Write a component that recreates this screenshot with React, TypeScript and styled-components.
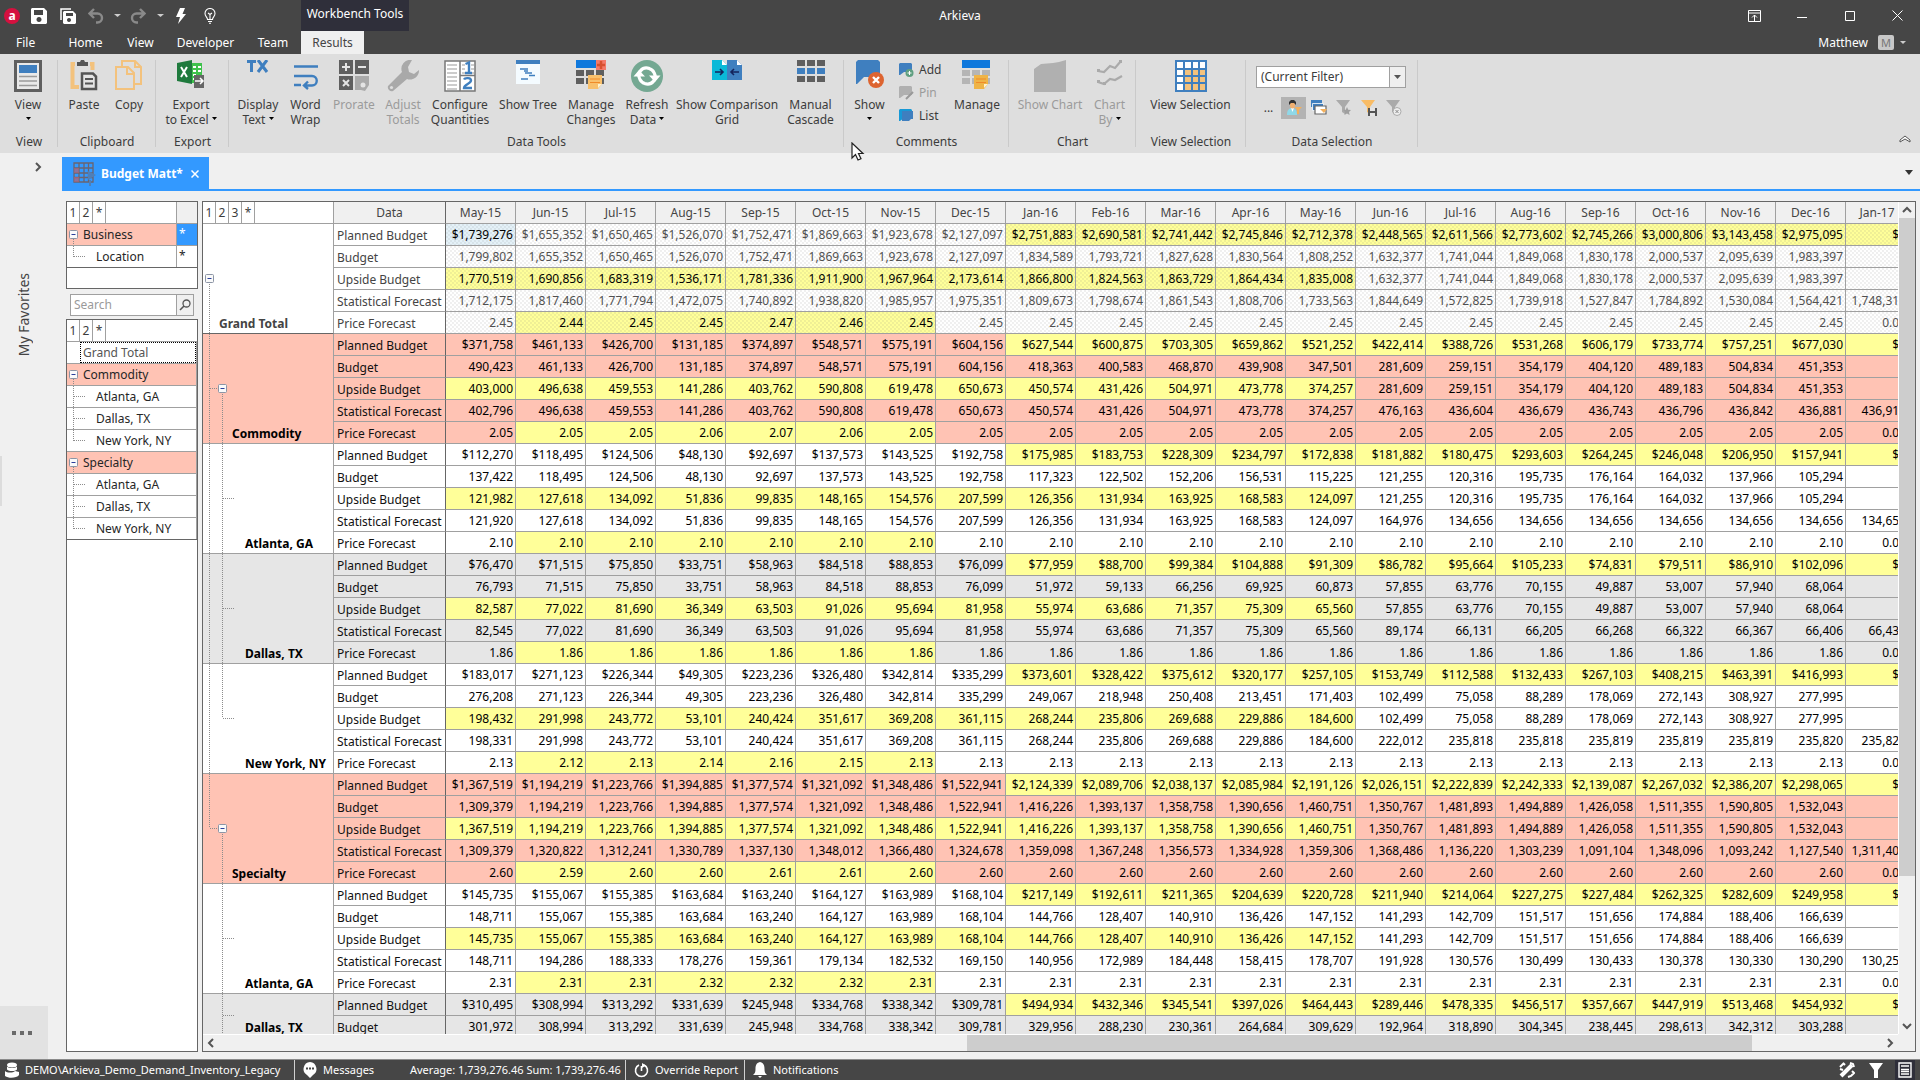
import React from 'react';
import styled, { createGlobalStyle, css } from 'styled-components';

const FONT = '"Noto Sans", "Open Sans", sans-serif';
const LINE = '#a0a0a0';
const FRAME = '#666666';
const PINK = '#ffc3b4';
const YELLOW = '#ffff99';
const BLUE = '#3399ff';

const GlobalStyle = createGlobalStyle`
  * { box-sizing: border-box; }
  body { margin: 0; font: 12px/16px ${FONT}; color: #262626; background: #f0f0f0; }
  button, input, select { font: inherit; color: inherit; margin: 0; }
  button { border: 0; padding: 0; background: none; }
`;

const Page = styled.div`
  height: 100vh;
  display: flex;
  flex-direction: column;
  overflow: hidden;
`;

/* ---------- title bar ---------- */

const TopBar = styled.header`
  flex: none;
  height: 54px;
  background: #464646;
  color: #fff;
  display: grid;
  grid-template-rows: 31px 23px;
`;

const TitleRow = styled.div`
  display: grid;
  grid-template-columns: 1fr auto 1fr;
  align-items: center;
`;

const QuickAccess = styled.div`
  display: flex;
  align-items: center;
  height: 31px;
  padding-left: 3px;
`;

const QuickButton = styled.button<{ $w: number }>`
  width: ${(p) => p.$w}px;
  height: 24px;
  display: flex;
  align-items: center;
  justify-content: center;
  svg { display: block; flex: none; }
`;

const ContextLabel = styled.div`
  width: 108px;
  height: 31px;
  margin-left: 78px;
  padding-top: 6px;
  text-align: center;
  white-space: nowrap;
  background: #2f2f3a;
`;

const AppTitle = styled.h1`
  margin: 0;
  font-size: 12px;
  font-weight: 400;
`;

const WindowButtons = styled.div`
  display: flex;
  justify-content: flex-end;
`;

const WindowButton = styled.button`
  width: 48px;
  height: 30px;
  display: grid;
  place-items: center;
  &:last-child { width: 46px; }
`;

const MenuRow = styled.div`
  display: flex;
  align-items: stretch;
`;

const MenuTab = styled.button<{ $w: number; $active?: boolean }>`
  width: ${(p) => p.$w}px;
  text-align: center;
  ${(p) => p.$active && css`background: #f0f0f0; color: #444;`}
`;

const FileTab = styled(MenuTab)`
  text-align: left;
  padding-left: 16px;
`;

const Account = styled.button`
  margin-left: auto;
  display: flex;
  align-items: center;
  gap: 6px;
  padding-right: 14px;
`;

const Avatar = styled.span`
  width: 16px;
  height: 15px;
  margin-left: 4px;
  border-radius: 2px;
  background: #c8c8c8;
  color: #777;
  font-size: 11px;
  line-height: 15px;
  text-align: center;
`;

/* ---------- ribbon ---------- */

const Ribbon = styled.section`
  flex: none;
  height: 99px;
  background: #dedede;
  display: flex;
  color: #3c3c3c;
`;

const Group = styled.div<{ $w: number; $pad?: number }>`
  width: ${(p) => p.$w}px;
  padding-top: 6px;
  display: flex;
  flex-direction: column;
  background: linear-gradient(#cacaca, #cacaca) right 6px / 1px 87px no-repeat;
  > div:first-child { padding-left: ${(p) => p.$pad ?? 0}px; }
`;

const Items = styled.div`
  height: 73px;
  display: flex;
`;

const GroupName = styled.div`
  text-align: center;
  line-height: 18px;
  white-space: nowrap;
`;

const BigButton = styled.button<{ $w: number }>`
  width: ${(p) => p.$w}px;
  flex: none;
  display: flex;
  flex-direction: column;
  align-items: center;
  line-height: 15px;
  white-space: nowrap;
  &:disabled { color: #9b9b9b; }
  > svg { display: block; flex: none; margin-bottom: 5px; }
`;

const SmallColumn = styled.div`
  width: 57px;
  padding-left: 4px;
  display: flex;
  flex-direction: column;
`;

const SmallButton = styled.button`
  height: 23px;
  padding-bottom: 3px;
  display: flex;
  align-items: center;
  gap: 5px;
  &:disabled { color: #9b9b9b; }
`;

const FilterBox = styled.div`
  padding: 6px 0 0 10px;
`;

const SelectWrap = styled.label`
  display: grid;
  grid-template-columns: 1fr 17px;
  width: 150px;
  height: 22px;
  svg { grid-area: 1 / 2; pointer-events: none; }
`;

const Select = styled.select`
  grid-area: 1 / 1 / 2 / 3;
  appearance: none;
  border: 1px solid #a0a0a0;
  border-radius: 0;
  background: #fff;
  padding: 0 20px 0 4px;
`;

const FilterIcons = styled.div`
  display: flex;
  align-items: center;
  height: 22px;
  margin-top: 9px;
`;

const FilterIcon = styled.button<{ $on?: boolean }>`
  width: 25px;
  height: 22px;
  display: grid;
  place-items: center;
  background: ${(p) => (p.$on ? '#b3b3b3' : 'none')};
`;

const Collapse = styled.button`
  margin: auto 8px 8px auto;
  width: 14px;
  height: 12px;
  display: grid;
  place-items: center;
`;

/* ---------- work area ---------- */

const Work = styled.main`
  flex: 1;
  min-height: 0;
  display: flex;
`;

const Favorites = styled.aside`
  width: 48px;
  flex: none;
  display: flex;
  flex-direction: column;
  align-items: center;
`;

const Expand = styled.button`
  align-self: flex-end;
  width: 20px;
  height: 28px;
  display: grid;
  place-items: center;
`;

const FavoritesTitle = styled.div`
  margin-top: 92px;
  writing-mode: vertical-rl;
  transform: rotate(180deg);
  font-size: 14px;
  line-height: 20px;
  color: #444;
`;

const Splitter = styled.div`
  width: 2px;
  height: 50px;
  margin-top: 100px;
  align-self: flex-start;
  background: #dcdcdc;
`;

const MoreButton = styled.button`
  margin-top: auto;
  width: 48px;
  height: 53px;
  padding-right: 4px;
  background: #e2e2e2;
  display: grid;
  place-items: center;
`;

const Content = styled.div`
  flex: 1;
  min-width: 0;
  margin-left: 14px;
  display: flex;
  flex-direction: column;
`;

const TabStrip = styled.div`
  height: 38px;
  padding-top: 4px;
  border-bottom: 2px solid ${BLUE};
  display: flex;
`;

const DocTab = styled.div`
  height: 33px;
  width: 147px;
  padding: 0 8px 0 11px;
  background: ${BLUE};
  color: #fff;
  font-weight: 700;
  display: flex;
  align-items: center;
  white-space: nowrap;
  > span { margin: 0 auto 0 4px; }
`;

const IconButton = styled.button`
  display: grid;
  place-items: center;
  width: 12px;
  height: 16px;
`;

const TabMenu = styled(IconButton)`
  margin: 7px 5px 0 auto;
`;

const Panels = styled.div`
  flex: 1;
  min-height: 0;
  padding: 10px 4px 7px;
  display: grid;
  grid-template-columns: 132px minmax(0, 1fr);
  column-gap: 4px;
`;

const LeftColumn = styled.div`
  display: flex;
  flex-direction: column;
  min-height: 0;
`;

const Panel = styled.div<{ $grow?: boolean }>`
  border: 1px solid ${FRAME};
  background: #fff;
  ${(p) => (p.$grow ? css`flex: 1; min-height: 0;` : css`height: 88px;`)}
`;

const LevelBar = styled.div`
  display: flex;
  height: 22px;
  border-bottom: 1px solid ${LINE};
`;

const Level = styled.button`
  width: 13px;
  border-right: 1px solid ${LINE};
  color: #3c3c3c;
  text-align: center;
`;

const StarHead = styled.div`
  width: 21px;
  margin-left: auto;
  border-left: 1px solid ${LINE};
  background: #f0f0f0;
`;

const Tree = styled.ul`
  list-style: none;
  margin: 0;
  padding: 0;
  border-bottom: 1px solid ${FRAME};
`;

const TreeRow = styled.li<{ $parent?: boolean; $inset?: boolean }>`
  height: 22px;
  display: flex;
  color: #262626;
  border-bottom: 1px solid ${LINE};
  background: ${(p) => (p.$parent ? PINK : '#fff')};
  &:last-child { border-bottom: 0; height: 21px; }
  ${(p) => p.$inset && css`border-right: 1px solid ${LINE};`}
  > svg { flex: none; display: block; }
`;

const TreeText = styled.span<{ $deep?: boolean; $focus?: boolean }>`
  flex: 1;
  min-width: 0;
  padding-left: ${(p) => (p.$deep ? 16 : 3)}px;
  line-height: 22px;
  white-space: nowrap;
  ${(p) => p.$focus && css`outline: 1px dotted #000; outline-offset: -1px; line-height: 21px; color: #555;`}
`;

const StarCell = styled.span<{ $on?: boolean }>`
  width: 21px;
  border-left: 1px solid ${LINE};
  padding: 2px 0 0 2px;
  background: ${(p) => (p.$on ? BLUE : '#fff')};
  color: ${(p) => (p.$on ? '#fff' : '#262626')};
`;

const SearchBox = styled.form`
  display: flex;
  width: 124px;
  height: 22px;
  margin: 5px 0 3px 4px;
  border: 1px solid ${LINE};
  background: #fff;
`;

const SearchInput = styled.input`
  flex: 1;
  min-width: 0;
  border: 0;
  padding: 0 3px;
  background: none;
  &::placeholder { color: #9a9a9a; }
`;

const SearchButton = styled.button`
  width: 17px;
  border-left: 1px solid ${LINE};
  background: #f0f0f0;
  display: grid;
  place-items: center;
`;

/* ---------- grid ---------- */

const GridFrame = styled.div`
  border: 1px solid ${FRAME};
  background: #f0f0f0;
  display: grid;
  grid-template-columns: minmax(0, 1fr) 17px;
  grid-template-rows: minmax(0, 1fr) 17px;
  min-height: 0;
`;

const Viewport = styled.div`
  overflow: hidden;
  background: #fff;
`;

const Sheet = styled.table`
  table-layout: fixed;
  border-collapse: separate;
  border-spacing: 0;
  width: 1706px;
  th, td {
    padding: 0;
    height: 22px;
    border-right: 1px solid ${LINE};
    border-bottom: 1px solid ${LINE};
    white-space: nowrap;
    font-weight: 400;
    line-height: 20px;
  }
`;

const HeadCell = styled.th<{ $edge?: boolean }>`
  background: #f0f0f0;
  color: #444;
  && { padding-top: 1px; }
  ${(p) => p.$edge && css`&& { border-right-color: ${FRAME}; }`}
`;

type Tone = 'total' | 'parent' | 'plain' | 'gray';
const toneColor: Record<Tone, string> = { total: '#fff', parent: PINK, plain: '#fff', gray: '#e6e6e6' };

const NameCell = styled.th<{ $tone: Tone }>`
  background: ${(p) => toneColor[p.$tone]};
  ${(p) => p.$tone === 'total' && css`&& { border-bottom-color: ${FRAME}; }`}
`;

const NameInner = styled.div<{ $rows: number }>`
  height: ${(p) => p.$rows * 22 - 1}px;
  display: flex;
  align-items: flex-end;
  > svg { display: block; flex: none; align-self: flex-start; }
`;

const Name = styled.span<{ $soft: boolean }>`
  font-weight: 700;
  line-height: 18px;
  color: ${(p) => (p.$soft ? '#444' : '#000')};
`;

const MeasureCell = styled.th<{ $tone: Tone }>`
  text-align: left;
  background: ${(p) => toneColor[p.$tone]};
  color: ${(p) => (p.$tone === 'total' ? '#444' : '#111')};
  && { border-right-color: ${FRAME}; padding: 2px 0 0 3px; line-height: 19px; }
`;

const dots = css`
  background-image: radial-gradient(circle at 1px 1px, rgba(130, 130, 130, 0.12) 0 0.8px, transparent 1px),
    radial-gradient(circle at 3px 3px, rgba(130, 130, 130, 0.12) 0 0.8px, transparent 1px);
  background-size: 4px 4px;
`;

const ValueCell = styled.td<{ $tone: Tone; $hot: boolean; $current: boolean }>`
  text-align: right;
  background-color: ${(p) => (p.$current ? '#e4f1f8' : p.$hot ? YELLOW : toneColor[p.$tone])};
  color: ${(p) => (p.$tone === 'total' && !p.$hot && !p.$current ? '#505050' : '#000')};
  ${(p) => p.$tone === 'total' && dots}
  && { padding-right: 2px; }
`;

const VScroll = styled.div`
  display: flex;
  flex-direction: column;
  border-left: 1px solid #fff;
`;

const HScroll = styled.div`
  display: flex;
  border-top: 1px solid #fff;
`;

const ScrollArrow = styled.button`
  width: 16px;
  height: 16px;
  flex: none;
  display: grid;
  place-items: center;
`;

const Track = styled.div<{ $dir: 'row' | 'column' }>`
  flex: 1;
  display: flex;
  flex-direction: ${(p) => p.$dir};
`;

const Before = styled.div`
  flex: 748;
`;
const Thumb = styled.div<{ $grow: number }>`
  flex: ${(p) => p.$grow};
  background: #cdcdcd;
`;
const After = styled.div<{ $grow: number }>`
  flex: ${(p) => p.$grow};
`;

/* ---------- status bar ---------- */

const Status = styled.footer`
  flex: none;
  height: 21px;
  border-top: 1px solid #8a8a8a;
  background: #464646;
  color: #fff;
  display: flex;
  align-items: center;
  padding: 0 5px;
  font-size: 11px;
  white-space: nowrap;
`;

const StatusItem = styled.div<{ $w: number; $sep?: boolean }>`
  width: ${(p) => p.$w}px;
  height: 20px;
  display: flex;
  align-items: center;
  gap: 6px;
  ${(p) => p.$sep && css`border-right: 1px solid #d0d0d0;`}
  svg { flex: none; }
`;

const StatusTools = styled.div`
  margin-left: auto;
  display: flex;
`;

const StatusTool = styled.button<{ $on?: boolean }>`
  width: 20px;
  height: 20px;
  margin-left: 9px;
  display: grid;
  place-items: center;
  background: ${(p) => (p.$on ? '#2f2f3a' : 'none')};
`;

const Pointer = styled.svg`
  position: absolute;
  left: 851px;
  top: 142px;
`;

/* ---------- icons ---------- */

const Svg = ({ w, h, children }: { w: number; h: number; children: React.ReactNode }) => (
  <svg width={w} height={h} viewBox={`0 0 ${w} ${h}`} fill="none" aria-hidden="true">{children}</svg>
);

const Drop = ({ color = '#222', s = 5 }: { color?: string; s?: number }) => (
  <Svg w={s} h={4}><path d={`M0 0h${s}L${s / 2} 3z`} fill={color} /></Svg>
);

const SaveIcon = () => (
  <Svg w={16} h={16}><path fillRule="evenodd" fill="#fff" d="M1 0h12l3 3v12l-1 1H1l-1-1V1zM3 2v5h9V2zM8 9a2.500 2.500 0 1 0 .01 0z" /></Svg>
);
const SaveAllIcon = () => (
  <Svg w={16} h={16}>
    <path d="M1 12V1h10" stroke="#fff" strokeWidth="1.500" />
    <path fillRule="evenodd" fill="#fff" d="M4 3h9l3 3v9l-1 1H4l-1-1V4zM6 5v3h7V5zM9 10a2 2 0 1 0 .01 0z" />
  </Svg>
);
const UndoIcon = ({ flip }: { flip?: boolean }) => (
  <Svg w={16} h={16}>
    <g transform={flip ? 'matrix(-1 0 0 1 16 0)' : undefined}>
      <path d="M6 1L1.500 5.500L6 10M2 5.500h7.500a4.500 4.500 0 0 1 0 9H8" stroke="#8a8a8a" strokeWidth="2.400" />
    </g>
  </Svg>
);
const BoltIcon = () => <Svg w={10} h={16}><path d="M4 0h5L6.500 6H10L2 16L4 9H0z" fill="#fff" /></Svg>;
const BulbIcon = () => (
  <Svg w={12} h={16}>
    <path d="M3.500 11.500C3.500 9 1 8.500 1 5.500a5 5 0 0 1 10 0c0 3-2.500 3.500-2.500 6zM4 13.500h4M5 15.300h2M4 5l2 1.500L8 5M6 6.500V11" stroke="#fff" strokeWidth="1.100" />
  </Svg>
);

const ViewIcon = () => (
  <Svg w={28} h={32}>
    <rect x="1.500" y="1.500" width="25" height="29" fill="#e9e9e9" stroke="#5f5f5f" strokeWidth="3" />
    <path d="M5 5h18v8H5z" fill="#3f7fbf" />
    <path d="M5 16.500h18M5 21h18M5 25.500h18" stroke="#9a9a9a" strokeWidth="1.500" />
  </Svg>
);
const PasteIcon = () => (
  <Svg w={28} h={32}>
    <path d="M5 4H2.500v23H9M20 4h2.500v6" stroke="#f3c27d" strokeWidth="4" />
    <path d="M7 2h3l1-2h3l1 2h3v4H7z" fill="#555" />
    <path d="M12 13.500h11l3 3V29H12z" fill="#e4e4e4" stroke="#555" strokeWidth="2.500" />
    <path d="M15 19h8M15 23.500h8" stroke="#555" strokeWidth="2" />
  </Svg>
);
const CopyIcon = () => (
  <Svg w={28} h={32}>
    <path d="M7 7V1h13l6 6v17h-6M20 1v6h6" stroke="#f3c27d" strokeWidth="2" />
    <path d="M1 7h12l6 6v16H1zM12 8v6h6" fill="#dedede" stroke="#f3c27d" strokeWidth="2" />
  </Svg>
);
const ExcelIcon = () => (
  <Svg w={28} h={32}>
    <path d="M14 3h11v20H14z" fill="#3fc24c" />
    <path d="M16 7h3M21 7h3M16 11h3M21 11h3M16 15h3M16 19h3" stroke="#fff" strokeWidth="2" />
    <path d="M0 3L15 0v24L0 21z" fill="#1f7a3d" />
    <path d="M4 7l6 10M10 7L4 17" stroke="#fff" strokeWidth="2" />
    <path d="M17 15h10v13H17z" fill="#666" />
    <path d="M18 21h8M23 18l3 3l-3 3" stroke="#fff" strokeWidth="1.500" />
  </Svg>
);
const TextIcon = () => (
  <Svg w={22} h={32}>
    <path d="M0 1.500h9M4.500 1.500V12M11 0l9 12M20 0l-9 12" stroke="#3f7fbf" strokeWidth="3" />
  </Svg>
);
const WrapIcon = () => (
  <Svg w={26} h={32}>
    <path d="M1 6.500h24M1 16h18a4.500 4.500 0 0 1 0 9.500h-7M1 25h7M15 21.500L11 25.500L15 29" stroke="#3f7fbf" strokeWidth="2.400" />
  </Svg>
);
const ProrateIcon = () => (
  <Svg w={30} h={32}>
    <path d="M0 0h14v14H0zM16 0h14v14H16zM0 16h14v14H0z" fill="#5f5f5f" />
    <path d="M16 16h14v9l-4 6l-4-1h-6z" fill="#aaa" />
    <circle cx="24" cy="25" r="2.500" fill="#e4e4e4" />
    <path d="M3 7h8M7 3v8M19 7h8M4 20l6 6M10 20l-6 6" stroke="#e4e4e4" strokeWidth="2" />
  </Svg>
);
const WrenchIcon = () => (
  <Svg w={32} h={32}>
    <path d="M25 0a9 9 0 0 0-10 12L1 26a4 4 0 0 0 5 5l14-12a9 9 0 0 0 12-9l-5 4l-5-2l-1-5z" fill="#a9a9a9" />
    <circle cx="4.500" cy="27.500" r="1.600" fill="#dedede" />
  </Svg>
);
const QuantIcon = () => (
  <Svg w={32} h={32}>
    <path d="M1 1h30v30H1z" fill="#fff" stroke="#777" strokeWidth="1.500" />
    <path d="M16 1v30M16 15.500h15" stroke="#777" strokeWidth="1.500" />
    <path d="M3 5h10M3 9h10M3 13h10M3 17h10M3 21h10M3 25h10M3 29h10M18 5h3M18 9h3M18 13h3M27 5h3M27 9h3M27 13h3" stroke="#999" strokeWidth="1.200" />
    <path d="M21.500 4L25 2.500V13.500M21 13h7M20 19.500c1-2 7-2 7 1c0 3-7 4-7 7.500h8" stroke="#3f7fbf" strokeWidth="2.400" />
  </Svg>
);
const TreeIcon = () => (
  <Svg w={24} h={32}>
    <path d="M0 0h24v24H0z" fill="#f4fbff" /><path d="M0 0h24v4H0z" fill="#3f7fbf" />
    <path d="M4 9h8M9 13h7M13 15.500h6M5 19h7M8 11h4" stroke="#3f7fbf" strokeWidth="1.300" />
  </Svg>
);
const GridCells = ({ c }: { c: string }) => (
  <path d="M0 10h8v6H0zM10 10h8v6h-8zM20 10h8v6h-8zM0 18h8v6H0zM10 18h8v6h-8zM20 18h8v6h-8z" fill={c} />
);
const ManageIcon = ({ changes }: { changes?: boolean }) => (
  <Svg w={30} h={32}>
    <path d={changes ? 'M0 0h20v8H0z' : 'M0 0h28v8H0z'} fill="#0f78dc" />
    {changes && <path d="M20 0h10v10H20z" fill="#f47a6a" />}
    {changes && <path d="M21 5h8M25 1v8" stroke="#d8502f" strokeWidth="2.500" />}
    <GridCells c={changes ? '#5f5f5f' : '#b5b5b5'} />
    <path d="M12 15h14v9l-4 5H12z" fill={changes ? '#f8c06c' : '#efb447'} />
    <path d="M14 19h10M14 22.500h10" stroke="#f08a28" strokeWidth="1.200" />
    <path d="M22 28v-4h4z" fill="#fff3d0" />
  </Svg>
);
const RefreshIcon = () => (
  <Svg w={32} h={32}>
    <circle cx="16" cy="16" r="16" fill="#74a892" />
    <path d="M18.500 8.500C11 6 5.500 13 9 19.500c1 2 3 3.500 5 4M13.500 23.500c7.500 2.500 13-4.500 9.500-11c-1-2-3-3.500-5-4" stroke="#fff" strokeWidth="3.200" />
    <path d="M2.500 16.500L8 10l6 6.500zM18 15.500h11.500L24 22z" fill="#fff" />
  </Svg>
);
const CompareIcon = () => (
  <Svg w={30} h={32}>
    <path d="M0 0h10l5 5v15H0z" fill="#0ab9d8" /><path d="M15 0h10l5 5v15H15z" fill="#3f7fbf" />
    <path d="M10 0v5h5zM25 0v5h5z" fill="#fff" />
    <path d="M3 12h8M8 9l3 3l-3 3M27 12h-8M22 9l-3 3l3 3" stroke="#14245c" strokeWidth="1.600" />
  </Svg>
);
const CascadeIcon = () => (
  <Svg w={28} h={32}>
    <path d="M0 0h8v6H0zM10 0h8v6h-8zM20 0h8v6h-8zM0 16h8v6H0zM10 16h8v6h-8zM20 16h8v6h-8z" fill="#5f5f5f" />
    <path d="M0 8h8v6H0zM10 8h8v6h-8zM20 8h8v6h-8z" fill="#3f7fbf" />
  </Svg>
);
const ShowIcon = () => (
  <Svg w={28} h={32}>
    <path d="M2 0h20l2 2v15H8l-7 7H0V2z" fill="#3f7fbf" />
    <circle cx="20" cy="20" r="8" fill="#dd6430" />
    <path d="M17 17l6 6M23 17l-6 6" stroke="#fff" strokeWidth="2.400" />
  </Svg>
);
const Bubble = ({ c, children }: { c: string; children?: React.ReactNode }) => (
  <Svg w={15} h={16}><path d="M1 1h11l1 1v8H5l-4 3H0V2z" fill={c} />{children}</Svg>
);
const AreaIcon = () => <Svg w={32} h={32}><path d="M0 32V9l7-5l12-1l6-1l7-2v32z" fill="#b0b0b0" /></Svg>;
const LinesIcon = () => (
  <Svg w={26} h={32}>
    <path d="M1 11l6 1l6-6l5 2l6-7M1 22l6 2l6-5l5 1l7-4" stroke="#aaa" strokeWidth="2.200" />
    <path d="M0 9h3v3H0zM22 0h3v3h-3zM0 20h3v3H0zM6 22h3v3H6z" fill="#aaa" />
  </Svg>
);
const SelectionIcon = () => (
  <Svg w={32} h={32}>
    <path d="M0 0h32v32H0z" fill="#3f7fbf" />
    <path d="M2 2h6v6H2zM10 2h6v6h-6zM18 2h5v6h-5zM25 2h5v6h-5zM2 10h6v5H2zM2 17h6v5H2zM2 24h6v6H2z" fill="#fff" />
    <path d="M10 10h6v5h-6zM18 10h5v5h-5zM25 10h5v5h-5zM10 17h6v5h-6zM18 17h5v5h-5zM25 17h5v5h-5zM10 24h6v6h-6zM18 24h5v6h-5zM25 24h5v6h-5z" fill="#f3c27d" />
  </Svg>
);
const UserFilterIcon = () => (
  <Svg w={16} h={16}>
    <path d="M1 15c0-5 2-7 5-7s5 2 5 7z" fill="#8fd8e8" />
    <path d="M5 8h3l-1.500 4z" fill="#fff" />
    <path d="M4 3h5v3a2.500 2.500 0 0 1-5 0z" fill="#f0b070" />
    <path d="M3 5V2l2-2h3l2 2v3L8 3H5z" fill="#333" />
    <path d="M9 7h7l-3 3v4h-2v-4z" fill="#f3b05c" />
  </Svg>
);
const StackIcon = () => (
  <Svg w={16} h={16}>
    <path d="M0 0h11v7H0z" fill="#3f7fbf" /><path d="M1.500 3.500h11v7h-11z" fill="#3f7fbf" stroke="#fff" strokeWidth="0.800" />
    <path d="M4 6h11v8H4z" fill="#fff" stroke="#666" strokeWidth="1.200" /><path d="M9 9h7l-3 4z" fill="#f3b05c" />
  </Svg>
);
const FunnelIcon = ({ c, kind }: { c: string; kind: 'star' | 'save' | 'clear' }) => (
  <Svg w={16} h={16}>
    <path d="M0 0h14L9 7v7L6 12V7z" fill={c} />
    {kind === 'star' && <path d="M11 7l1.200 2.800L15 10l-2 2l.6 3L11 13.500L8.400 15L9 12l-2-2l2.800-.2z" fill="#9f9f9f" />}
    {kind === 'save' && <><path d="M7 8h9v8H7z" fill="#555" /><path d="M9 8h5v3H9zM9 13h5v3H9z" fill="#e4e4e4" /></>}
    {kind === 'clear' && <><circle cx="11" cy="11.500" r="4" fill="#eee" stroke="#aaa" /><path d="M9.500 10l3 3M12.500 10l-3 3" stroke="#888" /></>}
  </Svg>
);
const GridDocIcon = () => (
  <Svg w={24} h={24}>
    <path d="M1 1h19v19H1zM1 6h19M1 11h19M1 15.500h19M6 1v19M11 1v19M15.500 1v19" stroke="#6b6470" strokeWidth="1.300" />
    <path d="M1 6h5v5H1zM1 15h5v5H1z" fill="#b06470" fillOpacity="0.700" />
    <path d="M15 9l8 4l-8 5z" fill="#4f7fb8" /><path d="M17 18v6" stroke="#4f7fb8" strokeWidth="2" />
  </Svg>
);
const Chevron = ({ d }: { d: 'up' | 'down' | 'left' | 'right' }) => {
  const paths = { up: 'M1 7l4-4l4 4', down: 'M1 3l4 4l4-4', left: 'M7 1L3 5l4 4', right: 'M3 1l4 4l-4 4' };
  return <Svg w={10} h={10}><path d={paths[d]} stroke="#555" strokeWidth="2" /></Svg>;
};

/* ---------- tree guides ---------- */

const Toggle = ({ x, y }: { x: number; y: number }) => (
  <>
    <rect x={x - 3.5} y={y - 3.5} width="8" height="8" rx="1" fill="#fafafa" stroke="#8c95a5" />
    <path d={`M${x - 1.5} ${y + 0.5}h4`} stroke="#2b3f9a" />
  </>
);

const dotted = { stroke: '#8c8c8c', strokeDasharray: '1 1' };

type Guide = 'root' | 'parent' | 'lastParent' | 'child' | 'lastChild';

/* Guide lines in the left gutter of a merged name cell: first level at 6, second at 19. */
const NameGuide = ({ kind, rows, deepEnd, trunk }: { kind: Guide; rows: number; deepEnd?: boolean; trunk: boolean }) => {
  const h = rows * 22 - 1;
  const mid = Math.floor(h / 2);
  const w = kind === 'root' ? 16 : kind === 'parent' || kind === 'lastParent' ? 29 : 42;
  return (
    <Svg w={w} h={h}>
      {kind === 'root' && <><path d={`M6.500 ${mid}V${h}`} {...dotted} /><Toggle x={6} y={mid} /></>}
      {(kind === 'parent' || kind === 'lastParent') && (
        <>
          <path d={`M6.500 0V${kind === 'parent' ? h : mid}M7 ${mid + 0.5}h9M19.500 ${mid}V${h}`} {...dotted} />
          <Toggle x={19} y={mid} />
        </>
      )}
      {(kind === 'child' || kind === 'lastChild') && (
        <>
          {trunk && <path d={`M6.500 0V${h}`} {...dotted} />}
          <path d={`M19.500 0V${deepEnd ? mid : h}M20 ${mid + 0.5}h12`} {...dotted} />
        </>
      )}
    </Svg>
  );
};

const ListGuide = ({ kind }: { kind: 'none' | 'open' | 'child' | 'last' }) => (
  <Svg w={kind === 'child' || kind === 'last' ? 19 : 13} h={21}>
    {kind === 'open' && <><path d="M6.500 15V21" {...dotted} /><Toggle x={6} y={10} /></>}
    {kind === 'child' && <path d="M6.500 0V21M7 10.500h12" {...dotted} />}
    {kind === 'last' && <path d="M6.500 0V11M7 10.500h12" {...dotted} />}
  </Svg>
);

/* ---------- data ---------- */

const months = 'May-15 Jun-15 Jul-15 Aug-15 Sep-15 Oct-15 Nov-15 Dec-15 Jan-16 Feb-16 Mar-16 Apr-16 May-16 Jun-16 Jul-16 Aug-16 Sep-16 Oct-16 Nov-16 Dec-16 Jan-17'.split(' ');
const measures = ['Planned Budget', 'Budget', 'Upside Budget', 'Statistical Forecast', 'Price Forecast'];
const price = (start: string, rest: string) => `${start} ${Array(20 - start.split(' ').length).fill(rest).join(' ')} 0.00`;

interface Section { name: string; guide: Guide; tone: Tone; end?: boolean; trunk: boolean; rows: string[] }

const sections: Section[] = [
  { name: 'Grand Total', guide: 'root', tone: 'total', trunk: true, rows: [
    '$1,739,276 $1,655,352 $1,650,465 $1,526,070 $1,752,471 $1,869,663 $1,923,678 $2,127,097 $2,751,883 $2,690,581 $2,741,442 $2,745,846 $2,712,378 $2,448,565 $2,611,566 $2,773,602 $2,745,266 $3,000,806 $3,143,458 $2,975,095 $0',
    '1,799,802 1,655,352 1,650,465 1,526,070 1,752,471 1,869,663 1,923,678 2,127,097 1,834,589 1,793,721 1,827,628 1,830,564 1,808,252 1,632,377 1,741,044 1,849,068 1,830,178 2,000,537 2,095,639 1,983,397 0',
    '1,770,519 1,690,856 1,683,319 1,536,171 1,781,336 1,911,900 1,967,964 2,173,614 1,866,800 1,824,563 1,863,729 1,864,434 1,835,008 1,632,377 1,741,044 1,849,068 1,830,178 2,000,537 2,095,639 1,983,397 0',
    '1,712,175 1,817,460 1,771,794 1,472,075 1,740,892 1,938,820 1,985,957 1,975,351 1,809,673 1,798,674 1,861,543 1,808,706 1,733,563 1,844,649 1,572,825 1,739,918 1,527,847 1,784,892 1,530,084 1,564,421 1,748,316',
    price('2.45 2.44 2.45 2.45 2.47 2.46', '2.45'),
  ] },
  { name: 'Commodity', guide: 'parent', tone: 'parent', trunk: true, rows: [
    '$371,758 $461,133 $426,700 $131,185 $374,897 $548,571 $575,191 $604,156 $627,544 $600,875 $703,305 $659,862 $521,252 $422,414 $388,726 $531,268 $606,179 $733,774 $757,251 $677,030 $0',
    '490,423 461,133 426,700 131,185 374,897 548,571 575,191 604,156 418,363 400,583 468,870 439,908 347,501 281,609 259,151 354,179 404,120 489,183 504,834 451,353 0',
    '403,000 496,638 459,553 141,286 403,762 590,808 619,478 650,673 450,574 431,426 504,971 473,778 374,257 281,609 259,151 354,179 404,120 489,183 504,834 451,353 0',
    '402,796 496,638 459,553 141,286 403,762 590,808 619,478 650,673 450,574 431,426 504,971 473,778 374,257 476,163 436,604 436,679 436,743 436,796 436,842 436,881 436,914',
    price('2.05 2.05 2.05 2.06 2.07 2.06', '2.05'),
  ] },
  { name: 'Atlanta, GA', guide: 'child', tone: 'plain', trunk: true, rows: [
    '$112,270 $118,495 $124,506 $48,130 $92,697 $137,573 $143,525 $192,758 $175,985 $183,753 $228,309 $234,797 $172,838 $181,882 $180,475 $293,603 $264,245 $246,048 $206,950 $157,941 $0',
    '137,422 118,495 124,506 48,130 92,697 137,573 143,525 192,758 117,323 122,502 152,206 156,531 115,225 121,255 120,316 195,735 176,164 164,032 137,966 105,294 0',
    '121,982 127,618 134,092 51,836 99,835 148,165 154,576 207,599 126,356 131,934 163,925 168,583 124,097 121,255 120,316 195,735 176,164 164,032 137,966 105,294 0',
    '121,920 127,618 134,092 51,836 99,835 148,165 154,576 207,599 126,356 131,934 163,925 168,583 124,097 164,976 134,656 134,656 134,656 134,656 134,656 134,656 134,656',
    price('2.10', '2.10'),
  ] },
  { name: 'Dallas, TX', guide: 'child', tone: 'gray', trunk: true, rows: [
    '$76,470 $71,515 $75,850 $33,751 $58,963 $84,518 $88,853 $76,099 $77,959 $88,700 $99,384 $104,888 $91,309 $86,782 $95,664 $105,233 $74,831 $79,511 $86,910 $102,096 $0',
    '76,793 71,515 75,850 33,751 58,963 84,518 88,853 76,099 51,972 59,133 66,256 69,925 60,873 57,855 63,776 70,155 49,887 53,007 57,940 68,064 0',
    '82,587 77,022 81,690 36,349 63,503 91,026 95,694 81,958 55,974 63,686 71,357 75,309 65,560 57,855 63,776 70,155 49,887 53,007 57,940 68,064 0',
    '82,545 77,022 81,690 36,349 63,503 91,026 95,694 81,958 55,974 63,686 71,357 75,309 65,560 89,174 66,131 66,205 66,268 66,322 66,367 66,406 66,438',
    price('1.86', '1.86'),
  ] },
  { name: 'New York, NY', guide: 'lastChild', tone: 'plain', end: true, trunk: true, rows: [
    '$183,017 $271,123 $226,344 $49,305 $223,236 $326,480 $342,814 $335,299 $373,601 $328,422 $375,612 $320,177 $257,105 $153,749 $112,588 $132,433 $267,103 $408,215 $463,391 $416,993 $0',
    '276,208 271,123 226,344 49,305 223,236 326,480 342,814 335,299 249,067 218,948 250,408 213,451 171,403 102,499 75,058 88,289 178,069 272,143 308,927 277,995 0',
    '198,432 291,998 243,772 53,101 240,424 351,617 369,208 361,115 268,244 235,806 269,688 229,886 184,600 102,499 75,058 88,289 178,069 272,143 308,927 277,995 0',
    '198,331 291,998 243,772 53,101 240,424 351,617 369,208 361,115 268,244 235,806 269,688 229,886 184,600 222,012 235,818 235,818 235,819 235,819 235,819 235,820 235,820',
    price('2.13 2.12 2.13 2.14 2.16 2.15', '2.13'),
  ] },
  { name: 'Specialty', guide: 'lastParent', tone: 'parent', trunk: false, rows: [
    '$1,367,519 $1,194,219 $1,223,766 $1,394,885 $1,377,574 $1,321,092 $1,348,486 $1,522,941 $2,124,339 $2,089,706 $2,038,137 $2,085,984 $2,191,126 $2,026,151 $2,222,839 $2,242,333 $2,139,087 $2,267,032 $2,386,207 $2,298,065 $0',
    '1,309,379 1,194,219 1,223,766 1,394,885 1,377,574 1,321,092 1,348,486 1,522,941 1,416,226 1,393,137 1,358,758 1,390,656 1,460,751 1,350,767 1,481,893 1,494,889 1,426,058 1,511,355 1,590,805 1,532,043 0',
    '1,367,519 1,194,219 1,223,766 1,394,885 1,377,574 1,321,092 1,348,486 1,522,941 1,416,226 1,393,137 1,358,758 1,390,656 1,460,751 1,350,767 1,481,893 1,494,889 1,426,058 1,511,355 1,590,805 1,532,043 0',
    '1,309,379 1,320,822 1,312,241 1,330,789 1,337,130 1,348,012 1,366,480 1,324,678 1,359,098 1,367,248 1,356,573 1,334,928 1,359,306 1,368,486 1,136,220 1,303,239 1,091,104 1,348,096 1,093,242 1,127,540 1,311,402',
    price('2.60 2.59 2.60 2.60 2.61 2.61', '2.60'),
  ] },
  { name: 'Atlanta, GA', guide: 'child', tone: 'plain', trunk: false, rows: [
    '$145,735 $155,067 $155,385 $163,684 $163,240 $164,127 $163,989 $168,104 $217,149 $192,611 $211,365 $204,639 $220,728 $211,940 $214,064 $227,275 $227,484 $262,325 $282,609 $249,958 $0',
    '148,711 155,067 155,385 163,684 163,240 164,127 163,989 168,104 144,766 128,407 140,910 136,426 147,152 141,293 142,709 151,517 151,656 174,884 188,406 166,639 0',
    '145,735 155,067 155,385 163,684 163,240 164,127 163,989 168,104 144,766 128,407 140,910 136,426 147,152 141,293 142,709 151,517 151,656 174,884 188,406 166,639 0',
    '148,711 194,286 188,333 178,276 159,361 179,134 182,532 169,150 140,956 172,989 184,448 158,415 178,707 191,928 130,576 130,499 130,433 130,378 130,330 130,290 130,257',
    price('2.31 2.31 2.31 2.32 2.32 2.32', '2.31'),
  ] },
  { name: 'Dallas, TX', guide: 'child', tone: 'gray', trunk: false, rows: [
    '$310,495 $308,994 $313,292 $331,639 $245,948 $334,768 $338,342 $309,781 $494,934 $432,346 $345,541 $397,026 $464,443 $289,446 $478,335 $456,517 $357,667 $447,919 $513,468 $454,932 $0',
    '301,972 308,994 313,292 331,639 245,948 334,768 338,342 309,781 329,956 288,230 230,361 264,684 309,629 192,964 318,890 304,345 238,445 298,613 342,312 303,288 0',
  ] },
];

const isHot = (measure: number, col: number) =>
  (measure === 0 && col >= 8) || (measure === 2 && col <= 12) || (measure === 4 && col >= 1 && col <= 6);

const members: Array<[string, 'none' | 'open' | 'child' | 'last']> = [
  ['Grand Total', 'none'],
  ['Commodity', 'open'], ['Atlanta, GA', 'child'], ['Dallas, TX', 'child'], ['New York, NY', 'last'],
  ['Specialty', 'open'], ['Atlanta, GA', 'child'], ['Dallas, TX', 'child'], ['New York, NY', 'last'],
];

const Big = ({ w, icon, lines, drop, off }: { w: number; icon: React.ReactNode; lines: string[]; drop?: boolean; off?: boolean }) => (
  <BigButton $w={w} disabled={off}>
    {icon}
    {lines.map((line, i) => (
      <span key={i}>
        {line}
        {drop && i === lines.length - 1 && <>{line ? ' ' : ''}<svg width="5" height="8" viewBox="0 0 5 8" aria-hidden="true"><path d="M0 1h5L2.500 4z" fill="#000" /></svg></>}
      </span>
    ))}
  </BigButton>
);

const RibbonBar = () => (
  <Ribbon aria-label="Results ribbon">
    <Group $w={58}><Items><Big w={56} icon={<ViewIcon />} lines={['View', '']} drop /></Items><GroupName>View</GroupName></Group>
    <Group $w={98} $pad={3}>
      <Items><Big w={46} icon={<PasteIcon />} lines={['Paste']} /><Big w={44} icon={<CopyIcon />} lines={['Copy']} /></Items>
      <GroupName>Clipboard</GroupName>
    </Group>
    <Group $w={73}><Items><Big w={70} icon={<ExcelIcon />} lines={['Export', 'to Excel']} drop /></Items><GroupName>Export</GroupName></Group>
    <Group $w={615} $pad={6}>
      <Items>
        <Big w={46} icon={<TextIcon />} lines={['Display', 'Text']} drop />
        <Big w={49} icon={<WrapIcon />} lines={['Word', 'Wrap']} />
        <Big w={48} icon={<ProrateIcon />} lines={['Prorate']} off />
        <Big w={50} icon={<WrenchIcon />} lines={['Adjust', 'Totals']} off />
        <Big w={64} icon={<QuantIcon />} lines={['Configure', 'Quantities']} />
        <Big w={72} icon={<TreeIcon />} lines={['Show Tree']} />
        <Big w={54} icon={<ManageIcon changes />} lines={['Manage', 'Changes']} />
        <Big w={58} icon={<RefreshIcon />} lines={['Refresh', 'Data']} drop />
        <Big w={102} icon={<CompareIcon />} lines={['Show Comparison', 'Grid']} />
        <Big w={65} icon={<CascadeIcon />} lines={['Manual', 'Cascade']} />
      </Items>
      <GroupName>Data Tools</GroupName>
    </Group>
    <Group $w={165}>
      <Items>
        <Big w={51} icon={<ShowIcon />} lines={['Show', '']} drop />
        <SmallColumn>
          <SmallButton>
            <Bubble c="#3f7fbf"><circle cx="10.500" cy="11" r="4" fill="#5f9f80" /><path d="M8.500 11h4M10.500 9v4" stroke="#fff" /></Bubble>Add
          </SmallButton>
          <SmallButton disabled><Bubble c="#b0b0b0"><path d="M7 14l7-7" stroke="#999" strokeWidth="2" /></Bubble>Pin</SmallButton>
          <SmallButton><Bubble c="#1899d6"><path d="M3 3h11v8h-2l-2 2H3z" fill="#3f7fbf" /></Bubble>List</SmallButton>
        </SmallColumn>
        <Big w={50} icon={<ManageIcon />} lines={['Manage']} />
      </Items>
      <GroupName>Comments</GroupName>
    </Group>
    <Group $w={127} $pad={6}>
      <Items><Big w={70} icon={<AreaIcon />} lines={['Show Chart']} off /><Big w={49} icon={<LinesIcon />} lines={['Chart', 'By']} drop off /></Items>
      <GroupName>Chart</GroupName>
    </Group>
    <Group $w={110}><Items><Big w={109} icon={<SelectionIcon />} lines={['View Selection']} /></Items><GroupName>View Selection</GroupName></Group>
    <Group $w={172}>
      <Items>
        <FilterBox>
          <SelectWrap>
            <Select aria-label="Filter"><option>(Current Filter)</option></Select>
            <svg width="17" height="22" viewBox="0 0 17 22" aria-hidden="true"><path d="M0.500 1V21" stroke="#a0a0a0" /><path d="M1 1h15v20H1z" fill="#efefef" /><path d="M5 9h7l-3.500 4z" fill="#555" /></svg>
          </SelectWrap>
          <FilterIcons>
            <FilterIcon aria-label="More">...</FilterIcon>
            <FilterIcon $on aria-label="User filter"><UserFilterIcon /></FilterIcon>
            <FilterIcon aria-label="Filter list"><StackIcon /></FilterIcon>
            <FilterIcon aria-label="Favorite filter"><FunnelIcon c="#aaa" kind="star" /></FilterIcon>
            <FilterIcon aria-label="Save filter"><FunnelIcon c="#f8bc66" kind="save" /></FilterIcon>
            <FilterIcon aria-label="Clear filter"><FunnelIcon c="#aaa" kind="clear" /></FilterIcon>
          </FilterIcons>
        </FilterBox>
      </Items>
      <GroupName>Data Selection</GroupName>
    </Group>
    <Collapse aria-label="Collapse ribbon"><Svg w={12} h={9}><path d="M1 5l5-4l5 4v2L6 4L1 7z" fill="#fff" stroke="#555" /></Svg></Collapse>
  </Ribbon>
);

const LevelGroup = styled.div`
  display: flex;
  height: 21px;
`;

const LevelCells = ({ levels }: { levels: string[] }) => (
  <LevelGroup>{levels.map((l) => <Level key={l}>{l}</Level>)}</LevelGroup>
);

const DataSheet = () => (
  <Sheet>
    <colgroup>
      <col style={{ width: 131 }} /><col style={{ width: 112 }} />
      {months.map((m, i) => <col key={m} style={{ width: i === 20 ? 63 : 70 }} />)}
    </colgroup>
    <thead>
      <tr>
        <th><LevelCells levels={['1', '2', '3', '*']} /></th>
        <HeadCell $edge scope="col">Data</HeadCell>
        {months.map((m) => <HeadCell key={m} scope="col">{m}</HeadCell>)}
      </tr>
    </thead>
    <tbody>
      {sections.map((s, si) => s.rows.map((row, r) => (
        <tr key={`${si}-${r}`}>
          {r === 0 && (
            <NameCell $tone={s.tone} rowSpan={s.rows.length} scope="rowgroup">
              <NameInner $rows={s.rows.length}>
                <NameGuide kind={s.guide} rows={s.rows.length} deepEnd={s.end} trunk={s.trunk} />
                <Name $soft={s.tone === 'total'}>{s.name}</Name>
              </NameInner>
            </NameCell>
          )}
          <MeasureCell $tone={s.tone} scope="row">{measures[r]}</MeasureCell>
          {row.split(' ').map((v, c) => (
            <ValueCell key={c} $tone={s.tone} $hot={isHot(r, c)} $current={si + r + c === 0}>{v}</ValueCell>
          ))}
        </tr>
      )))}
    </tbody>
  </Sheet>
);

export default function App() {
  return (
    <Page>
      <GlobalStyle />
      <TopBar>
        <TitleRow>
          <QuickAccess>
            <QuickButton $w={18} aria-label="Arkieva"><Svg w={16} h={16}><circle cx="8" cy="8" r="8" fill="#d5113f" /><text x="8" y="12" textAnchor="middle" fontSize="12" fontWeight="700" fill="#fff">a</text></Svg></QuickButton>
            <QuickButton $w={36} aria-label="Save"><SaveIcon /></QuickButton>
            <QuickButton $w={22} aria-label="Save all"><SaveAllIcon /></QuickButton>
            <QuickButton $w={34} aria-label="Undo"><UndoIcon /></QuickButton>
            <QuickButton $w={9} aria-label="Undo history"><Drop color="#ccc" s={7} /></QuickButton>
            <QuickButton $w={32} aria-label="Redo"><UndoIcon flip /></QuickButton>
            <QuickButton $w={12} aria-label="Redo history"><Drop color="#ccc" s={7} /></QuickButton>
            <QuickButton $w={30} aria-label="Run"><BoltIcon /></QuickButton>
            <QuickButton $w={27} aria-label="Tips"><BulbIcon /></QuickButton>
            <ContextLabel>Workbench Tools</ContextLabel>
          </QuickAccess>
          <AppTitle>Arkieva</AppTitle>
          <WindowButtons>
            <WindowButton aria-label="Ribbon options"><Svg w={13} h={12}><path d="M.500.500h12v11H.500zM.500 3h12M6.500 11V5M4 7.500L6.500 5L9 7.500" stroke="#fff" /></Svg></WindowButton>
            <WindowButton aria-label="Minimize"><Svg w={10} h={10}><path d="M0 6.500h10" stroke="#fff" /></Svg></WindowButton>
            <WindowButton aria-label="Maximize"><Svg w={10} h={10}><path d="M.500.500h9v9h-9z" stroke="#fff" /></Svg></WindowButton>
            <WindowButton aria-label="Close"><Svg w={11} h={11}><path d="M.500.500l10 10M10.500.500l-10 10" stroke="#fff" /></Svg></WindowButton>
          </WindowButtons>
        </TitleRow>
        <MenuRow>
          <FileTab $w={56}>File</FileTab>
          <MenuTab $w={59}>Home</MenuTab>
          <MenuTab $w={51}>View</MenuTab>
          <MenuTab $w={79}>Developer</MenuTab>
          <MenuTab $w={56}>Team</MenuTab>
          <MenuTab $w={63} $active>Results</MenuTab>
          <Account>Matthew<Avatar>M</Avatar><Drop color="#ccc" s={6} /></Account>
        </MenuRow>
      </TopBar>

      <RibbonBar />

      <Work>
        <Favorites>
          <Expand aria-label="Expand favorites"><Chevron d="right" /></Expand>
          <FavoritesTitle>My Favorites</FavoritesTitle>
          <Splitter />
          <MoreButton aria-label="More"><Svg w={20} h={4}><path d="M0 0h4v4H0zM8 0h4v4H8zM16 0h4v4h-4z" fill="#6a6a6a" /></Svg></MoreButton>
        </Favorites>
        <Content>
          <TabStrip>
            <DocTab>
              <GridDocIcon />
              <span>Budget Matt*</span>
              <IconButton aria-label="Close tab"><Svg w={8} h={8}><path d="M.500.500l7 7M7.500.500l-7 7" stroke="#fff" strokeWidth="1.500" /></Svg></IconButton>
            </DocTab>
            <TabMenu aria-label="Open tabs"><Svg w={8} h={5}><path d="M0 0h8L4 5z" fill="#333" /></Svg></TabMenu>
          </TabStrip>
          <Panels>
            <LeftColumn>
              <Panel>
                <LevelBar><Level>1</Level><Level>2</Level><Level>*</Level><StarHead /></LevelBar>
                <Tree>
                  <TreeRow $parent><ListGuide kind="open" /><TreeText>Business</TreeText><StarCell $on>*</StarCell></TreeRow>
                  <TreeRow><ListGuide kind="last" /><TreeText as={DeepText}>Location</TreeText><StarCell>*</StarCell></TreeRow>
                </Tree>
              </Panel>
              <SearchBox>
                <SearchInput aria-label="Search" placeholder="Search" />
                <SearchButton aria-label="Search" type="button"><Svg w={12} h={12}><circle cx="7.500" cy="4.500" r="3.500" stroke="#555" strokeWidth="1.300" /><path d="M5 7L1 11" stroke="#555" strokeWidth="1.600" /></Svg></SearchButton>
              </SearchBox>
              <Panel $grow>
                <LevelBar><Level>1</Level><Level>2</Level><Level>*</Level></LevelBar>
                <Tree>
                  {members.map(([name, kind], i) => (
                    <TreeRow key={i} $parent={kind === 'open'} $inset>
                      <ListGuide kind={kind} />
                      {kind === 'child' || kind === 'last'
                        ? <DeepText>{name}</DeepText>
                        : <TreeText $focus={kind === 'none'}>{name}</TreeText>}
                    </TreeRow>
                  ))}
                </Tree>
              </Panel>
            </LeftColumn>
            <GridFrame>
              <Viewport><DataSheet /></Viewport>
              <VScroll>
                <ScrollArrow aria-label="Scroll up"><Chevron d="up" /></ScrollArrow>
                <Track $dir="column"><Thumb $grow={659} /><After $grow={142} /></Track>
                <ScrollArrow aria-label="Scroll down"><Chevron d="down" /></ScrollArrow>
              </VScroll>
              <HScroll>
                <ScrollArrow aria-label="Scroll left"><Chevron d="left" /></ScrollArrow>
                <Track $dir="row"><Before /><Thumb $grow={784} /><After $grow={130} /></Track>
                <ScrollArrow aria-label="Scroll right"><Chevron d="right" /></ScrollArrow>
              </HScroll>
            </GridFrame>
          </Panels>
        </Content>
      </Work>

      <Status>
        <StatusItem $w={290} $sep>
          <Svg w={14} h={16}><ellipse cx="7" cy="3" rx="5" ry="2.500" fill="#fff" /><path d="M2 4.500c2 2 8 2 10 0v3c-2 2-8 2-10 0zM0 9c2 2 8 2 10 0l4 1v3c-2 3-10 4-14 1z" fill="#fff" /></Svg>
          DEMO\Arkieva_Demo_Demand_Inventory_Legacy
        </StatusItem>
        <StatusItem $w={8} />
        <StatusItem $w={107}>
          <Svg w={14} h={16}><path d="M7 0a7 7 0 0 1 3 13l-3 3l-3-3A7 7 0 0 1 7 0z" fill="#fff" /><path d="M3 6.500h2M6 6.500h2M9 6.500h2" stroke="#464646" strokeWidth="2" /></Svg>
          Messages
        </StatusItem>
        <StatusItem $w={216} $sep>Average: 1,739,276.46 Sum: 1,739,276.46</StatusItem>
        <StatusItem $w={8} />
        <StatusItem $w={111} $sep>
          <Svg w={15} h={15}><path d="M5 2a6 6 0 1 0 5 0M7.500 8V3" stroke="#fff" strokeWidth="1.600" /><path d="M8 0l4 2.500L8 5z" fill="#fff" /></Svg>
          Override Report
        </StatusItem>
        <StatusItem $w={8} />
        <StatusItem $w={100}>
          <Svg w={14} h={16}><path d="M7 0c4 1 4.500 4 4.500 7c0 3 .5 4 2.500 6H0c2-2 2.500-3 2.500-6C2.500 4 3 1 7 0zM5 14h4l-2 2z" fill="#fff" /></Svg>
          Notifications
        </StatusItem>
        <StatusTools>
          <StatusTool aria-label="Tools"><Svg w={16} h={16}><path d="M2 14L13 3" stroke="#fff" strokeWidth="4" /><path d="M1 5l4-4M1 7l3 1M9 15l3-1l3-3l-2-2M11 1l3 1l1 3M4 1l2 2" stroke="#fff" strokeWidth="2" /></Svg></StatusTool>
          <StatusTool aria-label="Filter"><Svg w={14} h={15}><path d="M0 0h14L9 7v8H5V7z" fill="#fff" /></Svg></StatusTool>
          <StatusTool $on aria-label="Details"><Svg w={14} h={16}><path d="M1 1h12v14H1zM3 4h8M3 7.500h8M3 9.500h8M3 12h8" stroke="#fff" strokeWidth="1.400" /></Svg></StatusTool>
        </StatusTools>
      </Status>

      <Pointer width="14" height="20" viewBox="0 0 14 20" aria-hidden="true">
        <path d="M1 1v15l3.500-3.500L7 18l3-1.300L7.500 11.500H12z" fill="#fff" stroke="#222" strokeWidth="1.200" />
      </Pointer>
    </Page>
  );
}

const DeepText = styled(TreeText)`
  padding-left: 10px;
`;
